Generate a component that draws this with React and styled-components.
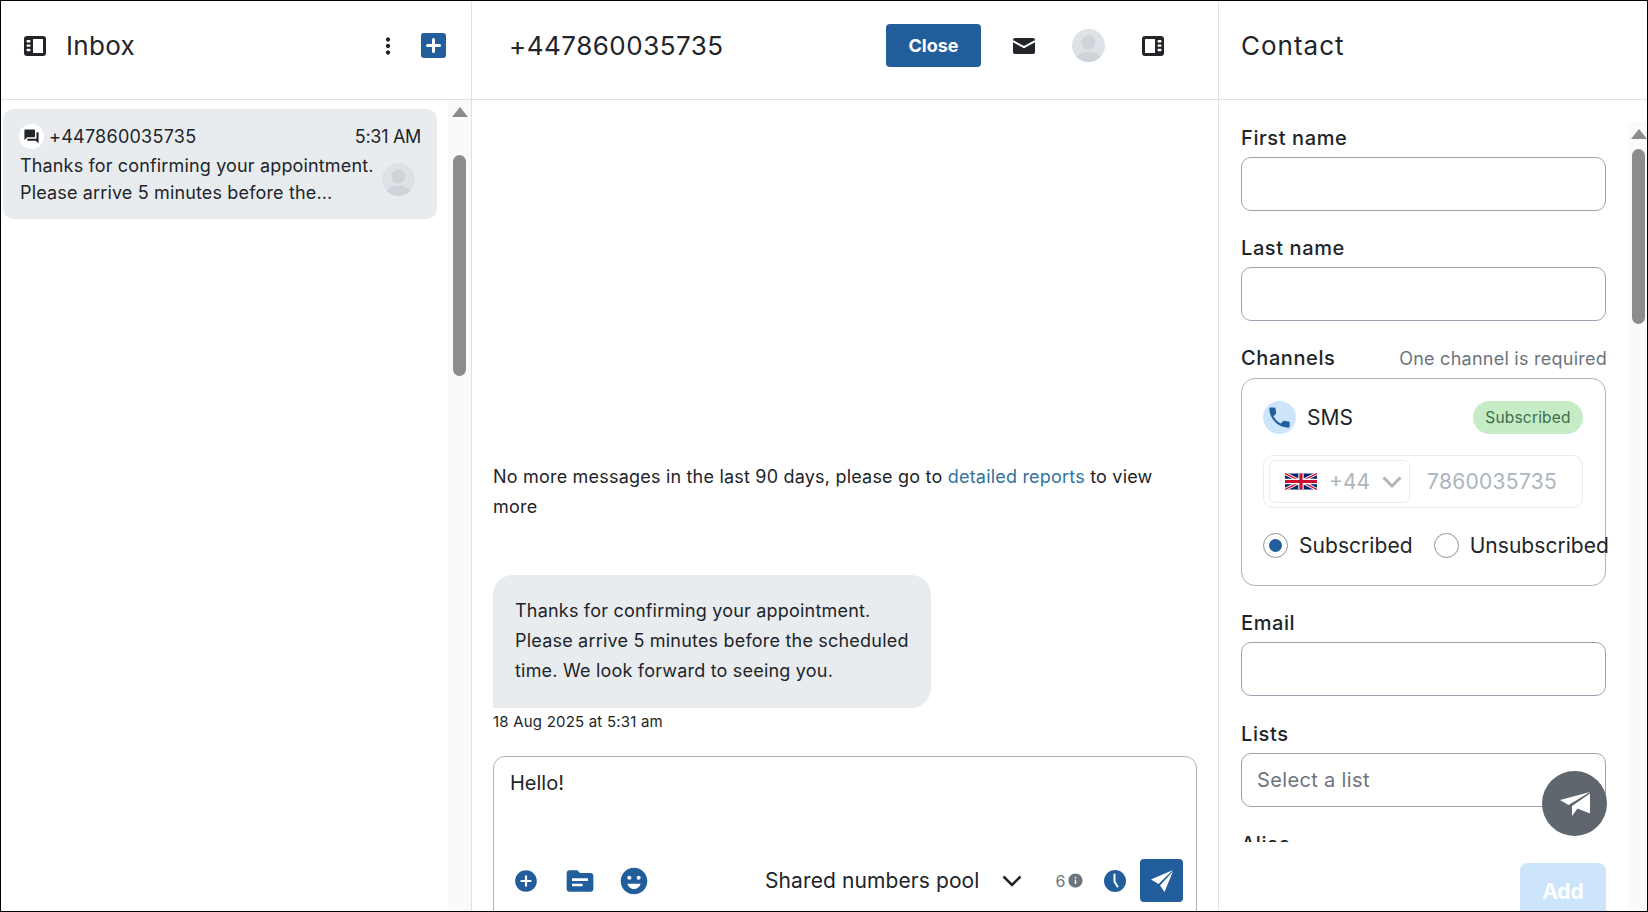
import React from "react";
import styled, { createGlobalStyle } from "styled-components";
import { MdMoreVert, MdQuestionAnswer, MdAddCircle, MdTopic, MdEmojiEmotions, MdPhone, MdInfo } from "react-icons/md";

const brand = "#225e9b";
const ink = "#212529";

const GlobalStyle = createGlobalStyle`
  html, body { margin: 0; padding: 0; height: 100%; overflow: hidden; }
  body { font-family: Inter, "Liberation Sans", sans-serif; color: ${ink}; background: #fff; }
  * { box-sizing: border-box; }
`;

const Shell = styled.div`
  width: 1648px;
  height: 912px;
  display: flex;
  border: 1px solid #000;
  overflow: hidden;
  background: #fff;
  position: relative;
`;

const Column = styled.section`
  width: ${(p) => p.$width}px;
  flex: none;
  height: 100%;
  display: flex;
  flex-direction: column;
  border-right: ${(p) => (p.$last ? "none" : "1px solid #dee2e6")};
`;

const Header = styled.header`
  height: 99px;
  flex: none;
  display: flex;
  align-items: center;
  padding: ${(p) => p.$padding};
  border-bottom: 1px solid #dee2e6;
`;

const Title = styled.h1`
  margin: ${(p) => p.$margin || 0};
  font-size: 26px;
  font-weight: 400;
  letter-spacing: ${(p) => p.$spacing || "0"};
  flex: ${(p) => (p.$grow ? 1 : "none")};
`;

const Body = styled.div`
  flex: 1;
  min-height: 0;
  display: flex;
`;

const ListPane = styled.div`
  flex: 1;
  padding: 9px 11px 0 2px;
`;

const Track = styled.div`
  width: ${(p) => p.$width}px;
  flex: none;
  background: #fafafa;
  margin-top: ${(p) => p.$top || 0}px;
  padding: 7px 0 0 ${(p) => p.$left}px;
`;

const TrackArrow = styled.div`
  width: 0;
  height: 0;
  margin-left: -1px;
  border-left: 8px solid transparent;
  border-right: 8px solid transparent;
  border-bottom: 10px solid #8c8c8c;
`;

const Thumb = styled.div`
  width: 13px;
  height: ${(p) => p.$height}px;
  margin-top: ${(p) => p.$gap}px;
  background: #8c8c8c;
  border-radius: 7px;
`;

const ThreadCard = styled.article`
  height: 110px;
  background: #e9ecef;
  border-radius: 10px;
  padding: 15px 16px 0 16px;
`;

const ThreadTop = styled.div`
  display: flex;
  align-items: center;
  font-size: 18px;
  letter-spacing: 0.25px;
`;

const ChatBadge = styled.span`
  width: 25px;
  height: 25px;
  border-radius: 50%;
  background: #fff;
  display: flex;
  align-items: center;
  justify-content: center;
  margin-right: 5px;
  font-size: 17px;
`;

const Grow = styled.span`
  flex: 1;
`;

const Time = styled.span`
  letter-spacing: -0.3px;
`;

const ThreadBottom = styled.div`
  display: flex;
  align-items: center;
  justify-content: space-between;
  margin-top: 3px;
  padding: 0 6px 0 1px;
`;

const Preview = styled.p`
  margin: 0;
  font-size: 18px;
  line-height: 27px;
  letter-spacing: 0.15px;
  white-space: nowrap;
`;

const AvatarShape = styled.svg`
  flex: none;
  display: block;
`;

const Avatar = ({ id }) => (
  <AvatarShape width={33} height={33} viewBox="0 0 33 33">
    <defs>
      <clipPath id={id}><circle cx="16.5" cy="16.5" r="16.5" /></clipPath>
    </defs>
    <g clipPath={`url(#${id})`}>
      <rect width="33" height="33" fill="#dee2e6" />
      <circle cx="16.5" cy="13.5" r="7" fill="#ced4da" />
      <ellipse cx="16.5" cy="30.5" rx="12" ry="8" fill="#ced4da" />
    </g>
  </AvatarShape>
);

const IconButton = styled.span`
  display: inline-flex;
  align-items: center;
  justify-content: center;
  flex: none;
  color: ${(p) => p.$color || ink};
  font-size: ${(p) => p.$size || 24}px;
  margin: ${(p) => p.$margin || 0};
`;

const PanelIcon = ({ flip }) => (
  <svg width="22" height="20" viewBox="0 0 22 20" style={{ transform: flip ? "scaleX(-1)" : "none" }}>
    <path fillRule="evenodd" fill={ink} d="M3 0h16a3 3 0 0 1 3 3v14a3 3 0 0 1-3 3H3a3 3 0 0 1-3-3V3a3 3 0 0 1 3-3zm6 3v14h9.500a.5.5 0 0 0 .5-.5v-13a.5.5 0 0 0-.5-.5H9z" />
    <rect x="2.500" y="4" width="4" height="2.400" rx="1" fill="#fff" />
    <rect x="2.500" y="8.400" width="4" height="2.400" rx="1" fill="#fff" />
    <rect x="2.500" y="12.800" width="4" height="2.400" rx="1" fill="#fff" />
  </svg>
);

const PlusSquare = () => (
  <svg width="25" height="25" viewBox="0 0 25 25">
    <rect width="25" height="25" rx="3" fill={brand} />
    <path d="M12.500 6.500v12M6.500 12.500h12" stroke="#fff" strokeWidth="3" strokeLinecap="round" />
  </svg>
);

const MailIcon = () => (
  <svg width="22" height="16" viewBox="0 0 22 16">
    <rect width="22" height="16" rx="2" fill={ink} />
    <path d="M0 3.200l11 6 11-6" fill="none" stroke="#fff" strokeWidth="2" />
  </svg>
);

const ClockIcon = () => (
  <svg width="22" height="22" viewBox="0 0 22 22">
    <circle cx="11" cy="11" r="11" fill={brand} />
    <path d="M10.500 4.500v7l3 5" fill="none" stroke="#fff" strokeWidth="2" strokeLinecap="round" />
  </svg>
);

const PlaneIcon = () => (
  <svg width="22" height="22" viewBox="0 0 22 22">
    <path fill="#fff" d="M22 0L0 9.500 7.500 14zM22 1.200L9 15.500 13.500 22z" />
  </svg>
);

const FabPlane = () => (
  <svg width="30" height="24" viewBox="0 0 30 24">
    <path fill="#fff" d="M0 8L30 0 8.500 13zM30 1.500V21.500L17.500 16.500 12 24V14z" />
  </svg>
);

const Chevron = ({ color, weight }) => (
  <svg width="20" height="12" viewBox="0 0 20 12">
    <path d="M1.500 1.500L10 10l8.500-8.500" fill="none" stroke={color} strokeWidth={weight} />
  </svg>
);

const CloseButton = styled.button`
  width: 95px;
  height: 43px;
  border: none;
  border-radius: 4px;
  background: ${brand};
  color: #fff;
  font: 700 18px Inter, sans-serif;
  margin-right: 32px;
`;

const Conversation = styled.div`
  flex: 1;
  min-height: 0;
  display: flex;
  flex-direction: column;
  justify-content: flex-end;
  padding: 0 21px 0 21px;
  overflow: hidden;
`;

const Notice = styled.p`
  margin: 0 0 53px;
  font-size: 18px;
  line-height: 30px;
  letter-spacing: 0.2px;
  width: 680px;
`;

const Link = styled.a`
  color: #33739f;
`;

const Bubble = styled.div`
  width: 438px;
  height: 133px;
  padding: 21px 22px 0;
  background: #e9ecef;
  border-radius: 20px 20px 20px 0;
  font-size: 18px;
  line-height: 30px;
  letter-spacing: 0.2px;
  white-space: nowrap;
`;

const Stamp = styled.div`
  font-size: 15px;
  line-height: 20px;
  margin: 4px 0 24px;
  letter-spacing: 0.2px;
`;

const Composer = styled.div`
  height: 156px;
  flex: none;
  margin-bottom: -1px;
  border: 1px solid #adb5bd;
  border-radius: 12px 12px 0 0;
  padding: 14px 13px 9px 16px;
  display: flex;
  flex-direction: column;
  justify-content: space-between;
`;

const Draft = styled.div`
  font-size: 20px;
  line-height: 24px;
`;

const ComposerTools = styled.div`
  display: flex;
  align-items: center;
`;

const Sender = styled.span`
  font-size: 21px;
  letter-spacing: 0.1px;
  margin: 0 22px 0 115px;
  white-space: nowrap;
`;

const Count = styled.span`
  font-size: 16px;
  color: #6c757d;
  margin-left: 34px;
`;

const SendButton = styled.button`
  width: 43px;
  height: 43px;
  border: none;
  border-radius: 4px;
  background: ${brand};
  display: flex;
  align-items: center;
  justify-content: center;
  margin-left: auto;
  padding: 0;
`;

const FormArea = styled.div`
  flex: 1;
  min-width: 0;
  display: flex;
  flex-direction: column;
`;

const FormScroll = styled.div`
  height: 742px;
  flex: none;
  overflow: hidden;
  padding: 25px 21px 0 22px;
`;

const Field = styled.div`
  margin-bottom: ${(p) => p.$after || 24}px;
`;

const LabelRow = styled.div`
  display: flex;
  justify-content: space-between;
  align-items: center;
  height: 26px;
  margin-bottom: ${(p) => p.$after || 6}px;
  font-size: 20px;
  font-weight: 500;
  letter-spacing: 0.6px;
`;

const Hint = styled.span`
  color: #6c757d;
  font-size: 18px;
  font-weight: 400;
  letter-spacing: 0.25px;
`;

const Input = styled.div`
  height: 54px;
  width: 365px;
  border: 1px solid #9aa5b1;
  border-radius: 10px;
  padding: 0 15px;
  display: flex;
  align-items: center;
  color: #6c757d;
  font-size: 20px;
  letter-spacing: 0.35px;
`;

const ChannelCard = styled.div`
  width: 365px;
  height: 208px;
  border: 1px solid #adb5bd;
  border-radius: 14px;
  padding: 22px 22px 0 21px;
`;

const ChannelTop = styled.div`
  display: flex;
  align-items: center;
  height: 33px;
  font-size: 21px;
`;

const PhoneBubble = styled.span`
  width: 33px;
  height: 33px;
  border-radius: 50%;
  background: #cce5fb;
  color: ${brand};
  font-size: 27px;
  display: flex;
  align-items: center;
  justify-content: center;
  margin-right: 11px;
`;

const Pill = styled.span`
  height: 33px;
  width: 110px;
  margin-left: auto;
  border-radius: 17px;
  background: #c6ecc6;
  color: #3c6e4a;
  font-size: 15.5px;
  letter-spacing: 0.2px;
  display: flex;
  align-items: center;
  justify-content: center;
`;

const PhoneBox = styled.div`
  display: flex;
  align-items: center;
  height: 53px;
  width: 320px;
  margin-top: 21px;
  border: 1px solid #e9ecef;
  border-radius: 10px;
  padding: 0 5px;
  color: #adb5bd;
  font-size: 21px;
  letter-spacing: 0.3px;
`;

const CodeSelect = styled.div`
  display: flex;
  align-items: center;
  height: 43px;
  width: 141px;
  border: 1px solid #e9ecef;
  border-radius: 6px;
  padding: 0 0 0 15px;
  gap: 12px;
  margin-right: 17px;
  letter-spacing: 0;
`;

const RadioRow = styled.div`
  display: flex;
  align-items: center;
  margin-top: 25px;
  height: 25px;
  font-size: 21px;
  letter-spacing: 0.05px;
  white-space: nowrap;
`;

const Radio = styled.span`
  width: 25px;
  height: 25px;
  flex: none;
  border-radius: 50%;
  border: 1px solid #8a95a0;
  display: flex;
  align-items: center;
  justify-content: center;
  margin: 0 11px 0 ${(p) => p.$gap || 0}px;
  &::after {
    content: "";
    display: ${(p) => (p.$on ? "block" : "none")};
    width: 13px;
    height: 13px;
    border-radius: 50%;
    background: ${brand};
  }
`;

const Footer = styled.div`
  flex: 1;
  overflow: hidden;
  padding: 21px 22px 0 0;
  display: flex;
  justify-content: flex-end;
`;

const AddButton = styled.button`
  width: 86px;
  height: 56px;
  flex: none;
  border: none;
  border-radius: 8px;
  background: #cce5fb;
  color: #fff;
  font: 700 21px Inter, sans-serif;
`;

const Fab = styled.div`
  position: absolute;
  left: 1541px;
  top: 770px;
  width: 65px;
  height: 65px;
  border-radius: 50%;
  background: #5f666d;
  display: flex;
  align-items: center;
  justify-content: center;
`;

const UkFlag = () => (
  <svg width="32" height="17" viewBox="0 0 60 30">
    <rect width="60" height="30" fill="#012169" />
    <path d="M0 0l60 30M60 0L0 30" stroke="#fff" strokeWidth="6" />
    <path d="M0 0l60 30M60 0L0 30" stroke="#c8102e" strokeWidth="2.500" />
    <path d="M30 0v30M0 15h60" stroke="#fff" strokeWidth="10" />
    <path d="M30 0v30M0 15h60" stroke="#c8102e" strokeWidth="6" />
  </svg>
);

export default function App() {
  return (
    <>
      <GlobalStyle />
      <Shell>
        <Column $width={471}>
          <Header $padding="0 25px 9px 23px">
            <PanelIcon />
            <Title $margin="0 0 0 20px" $spacing="0.3px" $grow>Inbox</Title>
            <IconButton $size={26} $margin="0 20px 0 0"><MdMoreVert /></IconButton>
            <PlusSquare />
          </Header>
          <Body>
            <ListPane>
              <ThreadCard>
                <ThreadTop>
                  <ChatBadge><MdQuestionAnswer /></ChatBadge>
                  +447860035735
                  <Grow />
                  <Time>5:31 AM</Time>
                </ThreadTop>
                <ThreadBottom>
                  <Preview>
                    Thanks for confirming your appointment.
                    <br />
                    Please arrive 5 minutes before the...
                  </Preview>
                  <Avatar id="thread-avatar" />
                </ThreadBottom>
              </ThreadCard>
            </ListPane>
            <Track $width={23} $left={5}>
              <TrackArrow />
              <Thumb $height={221} $gap={38} />
            </Track>
          </Body>
        </Column>
        <Column $width={747}>
          <Header $padding="0 0 9px 37px">
            <Title $grow $spacing="0.5px">+447860035735</Title>
            <CloseButton>Close</CloseButton>
            <IconButton $margin="0 37px 0 0"><MailIcon /></IconButton>
            <Avatar id="header-avatar" />
            <IconButton $margin="0 54px 0 37px"><PanelIcon flip /></IconButton>
          </Header>
          <Conversation>
            <Notice>
              No more messages in the last 90 days, please go to <Link>detailed reports</Link> to view more
            </Notice>
            <Bubble>
              Thanks for confirming your appointment.
              <br />
              Please arrive 5 minutes before the scheduled
              <br />
              time. We look forward to seeing you.
            </Bubble>
            <Stamp>18 Aug 2025 at 5:31 am</Stamp>
            <Composer>
              <Draft>Hello!</Draft>
              <ComposerTools>
                <IconButton $color={brand} $size={26} $margin="0 25px 0 3px"><MdAddCircle /></IconButton>
                <IconButton $color={brand} $size={32} $margin="0 22px 0 0"><MdTopic /></IconButton>
                <IconButton $color={brand} $size={32}><MdEmojiEmotions /></IconButton>
                <Sender>Shared numbers pool</Sender>
                <Chevron color={ink} weight={2.5} />
                <Count>6</Count>
                <IconButton $color="#6c757d" $size={17} $margin="0 20px 0 2px"><MdInfo /></IconButton>
                <ClockIcon />
                <SendButton><PlaneIcon /></SendButton>
              </ComposerTools>
            </Composer>
          </Conversation>
        </Column>
        <Column $width={428} $last>
          <Header $padding="0 0 9px 22px">
            <Title $spacing="1px">Contact</Title>
          </Header>
          <Body>
            <FormArea>
              <FormScroll>
                <Field>
                  <LabelRow>First name</LabelRow>
                  <Input />
                </Field>
                <Field>
                  <LabelRow>Last name</LabelRow>
                  <Input />
                </Field>
                <Field>
                  <LabelRow $after={7}>
                    Channels
                    <Hint>One channel is required</Hint>
                  </LabelRow>
                  <ChannelCard>
                    <ChannelTop>
                      <PhoneBubble><MdPhone /></PhoneBubble>
                      SMS
                      <Pill>Subscribed</Pill>
                    </ChannelTop>
                    <PhoneBox>
                      <CodeSelect>
                        <UkFlag />
                        +44
                        <Chevron color="#adb5bd" weight={3} />
                      </CodeSelect>
                      7860035735
                    </PhoneBox>
                    <RadioRow>
                      <Radio $on />
                      Subscribed
                      <Radio $gap={21} />
                      Unsubscribed
                    </RadioRow>
                  </ChannelCard>
                </Field>
                <Field $after={25}>
                  <LabelRow>Email</LabelRow>
                  <Input />
                </Field>
                <Field>
                  <LabelRow>Lists</LabelRow>
                  <Input>Select a list</Input>
                </Field>
                <Field>
                  <LabelRow>Alias</LabelRow>
                  <Input />
                </Field>
              </FormScroll>
              <Footer>
                <AddButton>Add</AddButton>
              </Footer>
            </FormArea>
            <Track $width={19} $top={22} $left={4}>
              <TrackArrow />
              <Thumb $height={175} $gap={10} />
            </Track>
          </Body>
        </Column>
        <Fab><FabPlane /></Fab>
      </Shell>
    </>
  );
}
